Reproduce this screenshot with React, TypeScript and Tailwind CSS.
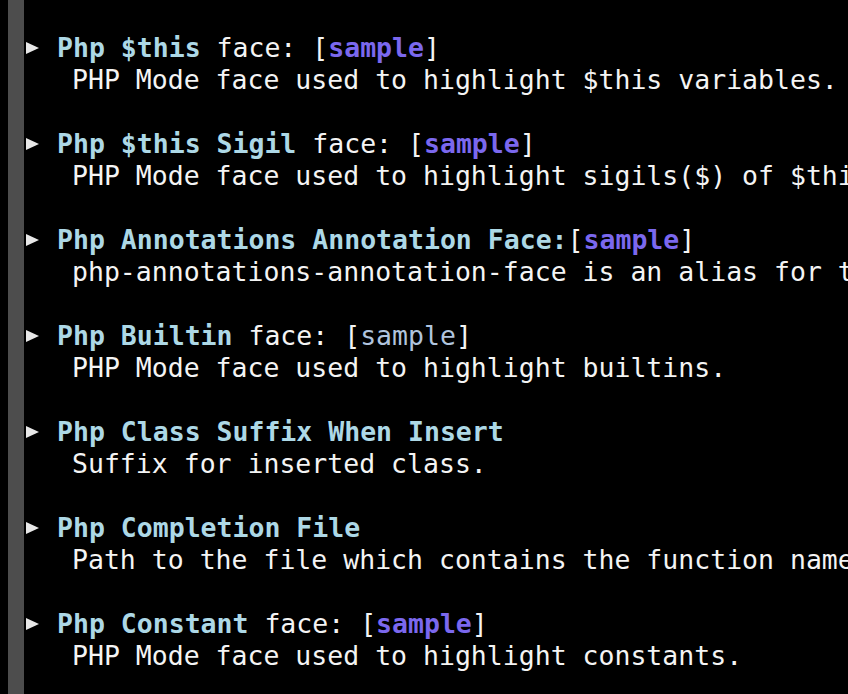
import React from 'react';

type Entry = {
    name: string;
    kind: 'face' | 'alias' | 'option';
    sample?: 'bold' | 'plain';
    doc: string;
};

const entries: Entry[] = [
    { name: 'Php $this', kind: 'face', sample: 'bold', doc: 'PHP Mode face used to highlight $this variables.' },
    { name: 'Php $this Sigil', kind: 'face', sample: 'bold', doc: 'PHP Mode face used to highlight sigils($) of $this variables.' },
    { name: 'Php Annotations Annotation Face', kind: 'alias', sample: 'bold', doc: 'php-annotations-annotation-face is an alias for the face php-doc-annotation-tag.' },
    { name: 'Php Builtin', kind: 'face', sample: 'plain', doc: 'PHP Mode face used to highlight builtins.' },
    { name: 'Php Class Suffix When Insert', kind: 'option', doc: 'Suffix for inserted class.' },
    { name: 'Php Completion File', kind: 'option', doc: 'Path to the file which contains the function names known to PHP.' },
    { name: 'Php Constant', kind: 'face', sample: 'bold', doc: 'PHP Mode face used to highlight constants.' },
];

function Arrow() {
    return (
        <svg width="14" height="12" viewBox="0 0 14 12" className="ml-[1px] mt-[10px] block">
            <polygon points="0,0 13,6 0,12" fill="#e8e8e8" />
        </svg>
    );
}

function Sample({ kind }: { kind: 'bold' | 'plain' }) {
    return kind === 'bold' ? (
        <span className="font-bold text-[#7b68ee]">sample</span>
    ) : (
        <span className="text-[#b0c4de]">sample</span>
    );
}

export default function App() {
    return (
        <div
            className="flex h-screen overflow-hidden bg-black text-[26.5px] leading-[32px] text-[#f4f4f4]"
            style={{ fontFamily: '"DejaVu Sans Mono", "Liberation Mono", monospace' }}
        >
            {/* fringe */}
            <div className="ml-2 w-4 shrink-0 bg-[#4d4d4d]" />

            {/* buffer */}
            <div className="-mt-8 flex-1 whitespace-pre pl-[1px]">
                <div className="h-8 pl-[48px]">PHP Mode face for name(s) used (for doc).</div>
                <div className="h-8" />
                {entries.map((e) => (
                    <div key={e.name}>
                        <div className="flex h-8">
                            <div className="w-8 shrink-0">
                                <Arrow />
                            </div>
                            <div>
                                <span className="font-bold text-[#add8e6]">{e.name}</span>
                                {e.kind === 'face' && (
                                    <>
                                        {' face: ['}
                                        <Sample kind={e.sample!} />
                                        {']'}
                                    </>
                                )}
                                {e.kind === 'alias' && (
                                    <>
                                        <span className="font-bold text-[#add8e6]">:</span>
                                        {'['}
                                        <Sample kind={e.sample!} />
                                        {']'}
                                    </>
                                )}
                            </div>
                        </div>
                        <div className="h-8 pl-[47px]">{e.doc}</div>
                        <div className="h-8" />
                    </div>
                ))}
            </div>
        </div>
    );
}
